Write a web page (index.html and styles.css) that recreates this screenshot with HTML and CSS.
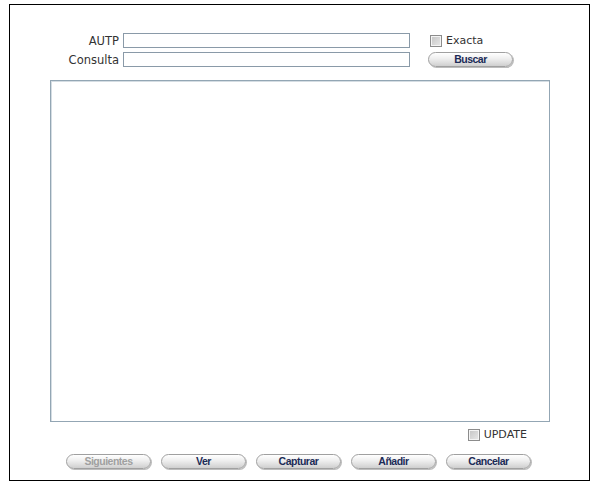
FILE: index.html
```html
<!DOCTYPE html>
<html lang="es">
<head>
    <meta charset="UTF-8">
    <link rel="stylesheet" href="styles.css">
    <title>Consulta AUTP</title>
</head>
<body>
    <div class="frame">
        <div class="search">
            <div class="row">
                <label class="label">AUTP</label>
                <input type="text" class="field">
                <span class="check_wrap"><span class="check"></span>Exacta</span>
            </div>
            <div class="row">
                <label class="label">Consulta</label>
                <input type="text" class="field">
                <button class="btn btn_buscar">Buscar</button>
            </div>
        </div>
        <div class="results"></div>
        <div class="update_row">
            <span class="check_wrap"><span class="check"></span>UPDATE</span>
        </div>
        <div class="actions">
            <button class="btn disabled">Siguientes</button>
            <button class="btn">Ver</button>
            <button class="btn">Capturar</button>
            <button class="btn">Añadir</button>
            <button class="btn">Cancelar</button>
        </div>
    </div>
</body>
</html>
```

FILE: styles.css
```css
*{
    margin: 0;
    padding: 0;
    box-sizing: border-box;
}
body{
    background-color: #fff;
    font-family: "DejaVu Sans", Verdana, sans-serif;
}
.frame{
    width: 581px;
    height: 477px;
    margin: 4px 0 0 9px;
    border: 1px solid #000;
}
.search{
    padding-top: 28px;
    display: flex;
    flex-direction: column;
    gap: 4px;
}
.row{
    display: flex;
    align-items: center;
    height: 15px;
}
.label{
    width: 109px;
    text-align: right;
    font-size: 11.5px;
    color: #333;
    margin-right: 4px;
}
.field{
    width: 287px;
    height: 15px;
    border: 1px solid #8a9aa8;
    outline: 0;
}
.check_wrap{
    display: flex;
    align-items: center;
    font-size: 11px;
    color: #333;
}
.row .check_wrap{
    margin-left: 20px;
}
.check{
    width: 12px;
    height: 12px;
    border: 1px solid #8c8c8c;
    background: linear-gradient(135deg, #c4c4c4, #e8e8e8);
    box-shadow: inset 0 0 0 1px #f4f4f4;
    margin-right: 4px;
}
.btn{
    width: 85px;
    height: 15px;
    border: 1px solid #a0a0a0;
    border-radius: 8px;
    background: linear-gradient(#ffffff, #eeeeee 45%, #cfcfcf);
    box-shadow: 1px 1px 0 #bdbdbd;
    font-family: "Liberation Sans", Arial, sans-serif;
    font-weight: bold;
    font-size: 10.5px;
    letter-spacing: -0.5px;
    color: #1c2b57;
    cursor: pointer;
    line-height: 13px;
}
.btn.disabled{
    color: #a0a0a0;
}
.btn_buscar{
    margin-left: 18px;
}
.results{
    width: 500px;
    height: 342px;
    margin: 13px 0 0 40px;
    border: 1px solid #93a6b4;
    box-shadow: inset 1px 1px 0 #d5dde3;
}
.update_row{
    display: flex;
    justify-content: flex-end;
    padding-right: 62px;
    margin-top: 6px;
}
.actions{
    display: flex;
    gap: 10px;
    margin: 13px 0 0 56px;
}
```
